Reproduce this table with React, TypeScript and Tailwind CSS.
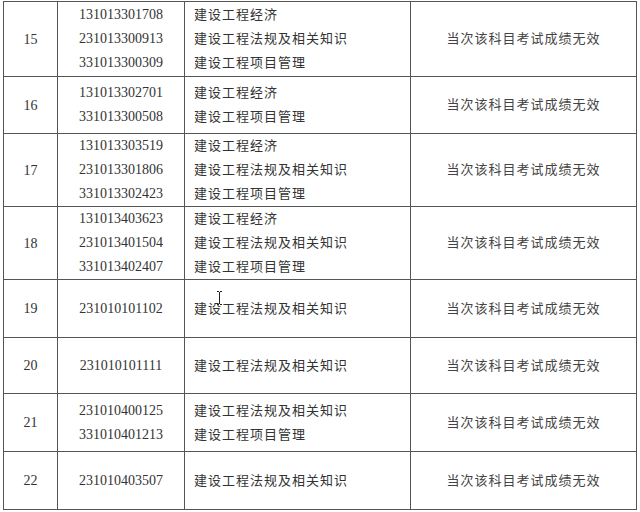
import React from "react";

interface Row {
  no: string;
  ids: string[];
  subjects: string[];
  h: string;
}

const rows: Row[] = [
  {
    no: "15",
    ids: ["131013301708", "231013300913", "331013300309"],
    subjects: ["建设工程经济", "建设工程法规及相关知识", "建设工程项目管理"],
    h: "h-[75px]",
  },
  {
    no: "16",
    ids: ["131013302701", "331013300508"],
    subjects: ["建设工程经济", "建设工程项目管理"],
    h: "h-[57px]",
  },
  {
    no: "17",
    ids: ["131013303519", "231013301806", "331013302423"],
    subjects: ["建设工程经济", "建设工程法规及相关知识", "建设工程项目管理"],
    h: "h-[73px]",
  },
  {
    no: "18",
    ids: ["131013403623", "231013401504", "331013402407"],
    subjects: ["建设工程经济", "建设工程法规及相关知识", "建设工程项目管理"],
    h: "h-[73px]",
  },
  {
    no: "19",
    ids: ["231010101102"],
    subjects: ["建设工程法规及相关知识"],
    h: "h-[58px]",
  },
  {
    no: "20",
    ids: ["231010101111"],
    subjects: ["建设工程法规及相关知识"],
    h: "h-[56px]",
  },
  {
    no: "21",
    ids: ["231010400125", "331010401213"],
    subjects: ["建设工程法规及相关知识", "建设工程项目管理"],
    h: "h-[58px]",
  },
  {
    no: "22",
    ids: ["231010403507"],
    subjects: ["建设工程法规及相关知识"],
    h: "h-[58px]",
  },
];

const cell = "border border-[#555] align-middle p-0";

// the text cursor caught in the screenshot
function IBeam() {
  return (
    <svg
      className="absolute left-[22px] top-[-6px]"
      width="7"
      height="14"
      viewBox="0 0 7 14"
      fill="none"
      stroke="#222"
      strokeWidth="1"
    >
      <path d="M1 0.5h2M4 0.5h2M3.5 1v12M1 13.5h2M4 13.5h2" />
    </svg>
  );
}

export default function App() {
  return (
    <div className="w-[640px] h-[512px] bg-white overflow-hidden pt-[1px] pl-[3px] font-['Liberation_Serif','Noto_Sans_CJK_SC',serif] text-[#333]">
      <table className="border-collapse table-fixed w-[633px]">
        <colgroup>
          <col className="w-[54px]" />
          <col className="w-[127px]" />
          <col className="w-[226px]" />
          <col className="w-[226px]" />
        </colgroup>
        <tbody>
          {rows.map((r) => (
            <tr key={r.no} className={r.h}>
              <td className={`${cell} text-center text-[14px]`}>{r.no}</td>
              <td className={`${cell} text-center text-[14px] leading-[24px]`}>
                {r.ids.map((id) => (
                  <div key={id}>{id}</div>
                ))}
              </td>
              <td className={`${cell} pl-[9px] text-[13px] leading-[24px] tracking-[1px]`}>
                {r.subjects.map((s, i) => (
                  <div key={i} className="relative">
                    {s}
                    {r.no === "19" && <IBeam />}
                  </div>
                ))}
              </td>
              <td className={`${cell} text-center text-[13px] tracking-[1px] text-[#444]`}>
                当次该科目考试成绩无效
              </td>
            </tr>
          ))}
        </tbody>
      </table>
    </div>
  );
}
